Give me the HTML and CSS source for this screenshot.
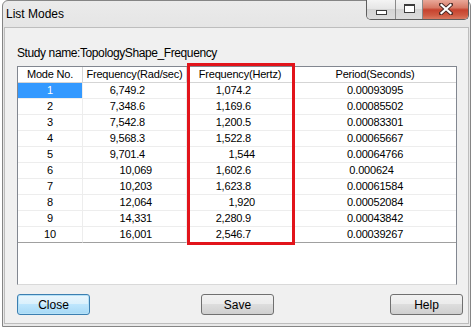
FILE: index.html
```html
<!DOCTYPE html>
<html>
<head>
	<meta http-equiv="Content-Type" content="text/html; charset=UTF-8">
	<title>List Modes</title>
	<link rel="stylesheet" href="styles.css">
</head>
<body>
	<div class="window">
		<div class="titlebar">
			<span class="title">List Modes</span>
			<div class="caption">
				<span class="cap cap-min"><i></i></span>
				<span class="cap cap-max"><i></i></span>
				<span class="cap cap-close">
					<svg width="14" height="12" viewBox="0 0 14 12">
						<path d="M2 1.5 L12 10.5 M12 1.5 L2 10.5" stroke="#4a2a26" stroke-width="4" stroke-linecap="square"/>
						<path d="M2.5 2 L11.5 10 M11.5 2 L2.5 10" stroke="#fff" stroke-width="2.2" stroke-linecap="square"/>
					</svg>
				</span>
			</div>
		</div>
		<div class="client">
			<div class="study">Study name:TopologyShape_Frequency</div>
			<div class="list">
				<div class="grid">
					<div class="hd">Mode No.</div>
					<div class="hd">Frequency(Rad/sec)</div>
					<div class="hd">Frequency(Hertz)</div>
					<div class="hd">Period(Seconds)</div>

					<div class="c1 sel">1</div><div class="c2">6,749.2</div><div class="c3">1,074.2</div><div class="c4">0.00093095</div>
					<div class="c1">2</div><div class="c2">7,348.6</div><div class="c3">1,169.6</div><div class="c4">0.00085502</div>
					<div class="c1">3</div><div class="c2">7,542.8</div><div class="c3">1,200.5</div><div class="c4">0.00083301</div>
					<div class="c1">4</div><div class="c2">9,568.3</div><div class="c3">1,522.8</div><div class="c4">0.00065667</div>
					<div class="c1">5</div><div class="c2">9,701.4</div><div class="c3 int">1,544</div><div class="c4">0.00064766</div>
					<div class="c1">6</div><div class="c2 int">10,069</div><div class="c3">1,602.6</div><div class="c4 short">0.000624</div>
					<div class="c1">7</div><div class="c2 int">10,203</div><div class="c3">1,623.8</div><div class="c4">0.00061584</div>
					<div class="c1">8</div><div class="c2 int">12,064</div><div class="c3 int">1,920</div><div class="c4">0.00052084</div>
					<div class="c1">9</div><div class="c2 int">14,331</div><div class="c3">2,280.9</div><div class="c4">0.00043842</div>
					<div class="c1 last">10</div><div class="c2 int last">16,001</div><div class="c3 last">2,546.7</div><div class="c4 last">0.00039267</div>
				</div>
				<div class="mark"></div>
			</div>
			<div class="actions">
				<button class="btn btn-default">Close</button>
				<button class="btn btn-save">Save</button>
				<button class="btn btn-help">Help</button>
			</div>
		</div>
	</div>
</body>
</html>
```

FILE: styles.css
```css
body {
	margin: 0;
	background: #fff;
	font-family: "Liberation Sans", Arial, sans-serif;
}

.window {
	box-sizing: border-box;
	width: 469px;
	height: 327px;
	margin-left: 2px;
	border: 1px solid #858585;
	border-radius: 6px 6px 0 0;
	padding: 0 1px 2px 1px;
	background: linear-gradient(#ebebeb, #e4e4e4 30px, #e9e9e9);
}

.titlebar {
	display: flex;
	height: 26px;
}

.title {
	padding: 6px 0 0 2px;
	font-size: 12px;
	line-height: 14px;
	color: #000;
}

.caption {
	display: flex;
	margin: -1px 0 0 auto;
	height: 19px;
	border: 1px solid #5e5e5e;
	border-top: 0;
	border-radius: 0 0 5px 5px;
	overflow: hidden;
}

.cap {
	display: flex;
	align-items: center;
	justify-content: center;
	height: 19px;
}

.cap-min,
.cap-max {
	border-right: 1px solid #8a8a8a;
	background: linear-gradient(#f4f4f4, #e6e6e6 45%, #d4d4d4 50%, #dcdcdc);
}

.cap-min {
	width: 28px;
}

.cap-max {
	width: 26px;
}

.cap-min i {
	display: block;
	box-sizing: border-box;
	width: 11px;
	height: 5px;
	margin-top: 5px;
	border: 1px solid #3c3c3c;
	background: #fff;
}

.cap-max i {
	display: block;
	box-sizing: border-box;
	width: 11px;
	height: 9px;
	margin-top: -2px;
	border: 1px solid #3c3c3c;
	border-top-width: 2px;
	background: #fff;
	box-shadow: inset 0 0 0 1px #fff;
}

.cap-close {
	width: 45px;
	background: linear-gradient(#e9a899, #d77a66 40%, #c6432f 52%, #cf5b43 80%, #da7a62);
}

.cap-close svg {
	margin-top: -1px;
}

.client {
	box-sizing: border-box;
	height: 297px;
	border: 1px solid #bdbdbd;
	background: #f0f0f0;
	padding: 18px 0 8px 12px;
}

.study {
	height: 14px;
	font-size: 12px;
	line-height: 14px;
	letter-spacing: -0.4px;
	color: #000;
}

.list {
	position: relative;
	box-sizing: border-box;
	width: 440px;
	height: 219px;
	margin-top: 6px;
	border: 1px solid #828790;
	border-bottom-color: #d9d9d9;
	background: #fff;
}

.grid {
	display: grid;
	grid-template-columns: 65px 104px 107px 162px;
	grid-auto-rows: 16px;
	font-size: 11px;
	line-height: 15px;
	letter-spacing: -0.2px;
	color: #000;
}

.grid div {
	box-sizing: border-box;
	border-right: 1px solid #ededed;
	border-bottom: 1px solid #ededed;
	white-space: nowrap;
}

.grid .hd {
	text-align: center;
	border-right-color: #d5d5d5;
	border-bottom-color: #d5d5d5;
}

.grid .hd:nth-child(4),
.grid .c4 {
	border-right: 0;
}

.c1 {
	text-align: center;
}

.c1.sel {
	background: #3399ff;
	color: #fff;
}

.c2 {
	text-align: right;
	padding-right: 41px;
}

.c2.int {
	padding-right: 34px;
}

.c3 {
	text-align: right;
	padding-right: 42px;
}

.c3.int {
	padding-right: 38px;
}

.c4 {
	text-align: center;
}

.c4.short {
	padding-right: 7px;
}

.grid .last {
	border-bottom-color: #a0a0a0;
}

.mark {
	position: absolute;
	left: 169px;
	top: -4px;
	width: 108px;
	height: 182px;
	box-sizing: border-box;
	border: 3px solid #e2141b;
}

.actions {
	display: flex;
	margin: 9px 5px 0 0;
}

.btn {
	box-sizing: border-box;
	width: 73px;
	height: 21px;
	padding: 0;
	border: 1px solid #707070;
	border-radius: 3px;
	background: linear-gradient(#f2f2f2, #ebebeb 50%, #dddddd 50%, #cfcfcf);
	font-family: "Liberation Sans", Arial, sans-serif;
	font-size: 12px;
	color: #000;
}

.btn-save {
	margin-left: 111px;
}

.btn-help {
	margin-left: auto;
}

.btn-default {
	border-color: #3c7fb1;
	background: linear-gradient(#eaf6fd, #d9f0fc 50%, #bee6fd 50%, #a7d9f5);
	box-shadow: inset 0 0 0 1px #b6e1f7;
}
```
